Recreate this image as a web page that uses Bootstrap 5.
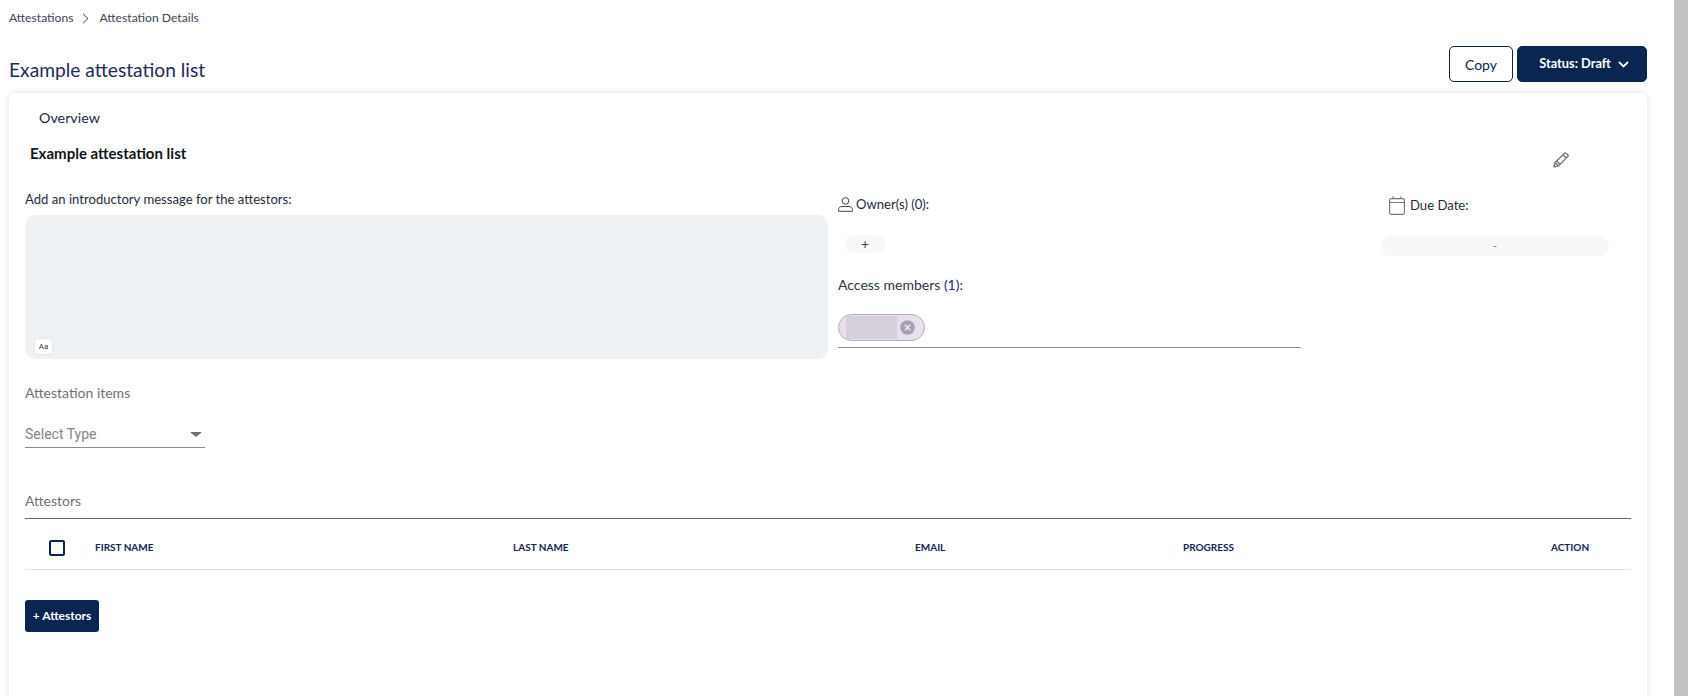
<!DOCTYPE html>
<html lang="en">
<head>
<meta charset="utf-8">
<title>Attestation Details</title>
<link href="https://cdn.jsdelivr.net/npm/bootstrap@5.3.0/dist/css/bootstrap.min.css" rel="stylesheet">
<style>
html,body{height:100%;overflow:hidden;background:#fff}
body{font-family:"Lato","Liberation Sans",sans-serif;color:#1f2a44;font-size:14px}
.shell{height:696px;overflow:hidden}
.scroll-track{width:14px;background:#c1c1c1;flex:none}
.content-area{width:1674px;flex:none;padding:0 27px 0 9px}
.crumbs{height:36px;font-size:12.15px;color:#3d4657}
.crumb-sep{margin:0 10px 0 8px;display:inline-flex}
.head-row{height:46px;margin-top:10px}
.page-title{font-size:19.2px;font-weight:400;color:#232a5c;margin:0;line-height:24px;padding-top:12px}
.btn-copy,.btn-status{height:36px;font-size:14px;border-radius:5px;padding:0;display:inline-flex;align-items:center;justify-content:center}
.btn-copy{width:64px;background:#fff;border:1px solid #0a2550;color:#0a2550}
.btn-status{width:130px;margin-left:4px;padding-left:4px;background:#0a2550;border:1px solid #0a2550;color:#fff;font-weight:700;font-size:12.8px;gap:7px}
.main-sheet{margin-top:1px;height:640px;border:0;border-radius:6px;box-shadow:0 0 6px rgba(0,0,0,.12);padding:0 16px}
.tab-label{padding:15px 0 0 14px;line-height:20px;font-size:14.3px;color:#232a44}
.sheet-title{margin:15px 0 0 5px;font-size:15px;font-weight:700;color:#10131c;line-height:20px;height:20px}
.edit-pencil{position:absolute;left:1544px;top:59px;line-height:0}
.overview-cols{margin-top:27px}
.col-intro{width:803px;flex:none}
.col-people{width:463px;margin-left:10px;flex:none}
.col-due{width:228px;margin-left:80px;flex:none}
.field-label{font-size:13.1px;line-height:18px;color:#262b3a}
.intro-box{margin-top:7px;height:144px;background:#eff2f5;border-radius:10px;position:relative}
.aa-chip{position:absolute;left:10px;bottom:5px;width:17px;height:15px;background:#fff;border-radius:4px;font-size:8px;line-height:15px;text-align:center;color:#444;font-family:"Roboto",sans-serif;box-shadow:0 0 2px rgba(0,0,0,.15)}
.owner-line{height:18px;margin-top:5px;display:flex;align-items:center;gap:3px}
.add-pill{margin:22px 0 0 7px;width:40px;height:18px;border-radius:9px;background:#f8f8f8;display:flex;align-items:center;justify-content:center;color:#444;font-size:14px;line-height:1}
.access-label{margin-top:22px;font-size:14px;line-height:20px;color:#2e3548}
.access-label b{font-weight:400;color:#232a7c}
.member-wrap{margin-top:19px;height:34px;border-bottom:1px solid #8c8c8c}
.member-chip{width:87px;height:27px;border-radius:14px;background:#e8e0ec;border:1px solid #b5adbd;display:flex;align-items:center;padding-left:7px}
.member-fill{width:51px;height:23px;background:#d8cfdd}
.member-x{margin-left:3px;line-height:0}
.due-line{height:18px;margin:6px 0 0 8px;display:flex;align-items:center;gap:5px}
.due-pill{margin-top:22px;height:20px;border-radius:10px;background:#f8f8f8;text-align:center;line-height:20px;color:#777;font-size:11px}
.section-label{color:#6f7178;font-size:14px;line-height:20px}
.items-label{margin-top:24px}
.type-select{margin-top:21px;width:180px;height:24px;border-bottom:1px solid #8c8c8c;display:flex;justify-content:space-between;align-items:center;padding:0 3px 3px 0;font-family:"Roboto",sans-serif;font-size:14px;color:#85868c}
.type-caret{width:0;height:0;border-left:6px solid transparent;border-right:6px solid transparent;border-top:5px solid #6f6f6f}
.attestors-label{margin-top:43px;height:28px;border-bottom:1px solid #6a6a6a;font-size:14px}
.att-table{width:1606px;table-layout:fixed;margin:0;--bs-table-border-color:#e2e2e2}
.att-table th{height:50px;padding:8px 0 0;vertical-align:middle;font-size:10px;font-weight:700;color:#14244f;text-transform:uppercase;border-bottom:1px solid #e2e2e2}
.check-box{display:block;width:16px;height:16px;border:2px solid #0a2550;border-radius:2px;margin-left:24px}
.btn-add{margin-top:30px;width:74px;height:32px;padding:0;background:#0a2550;border:0;border-radius:3px;color:#fff;font-size:12px;font-weight:700}
</style>
</head>
<body>
<div class="shell d-flex">
  <div class="content-area">
    <nav class="crumbs d-flex align-items-center" aria-label="breadcrumb">
      <span>Attestations</span>
      <span class="crumb-sep"><svg width="8" height="11" viewBox="0 0 8 11" fill="none" stroke="#444" stroke-width="1"><path d="M1 .8 6 5.5 1 10.2"/></svg></span>
      <span>Attestation Details</span>
    </nav>
    <div class="head-row d-flex justify-content-between align-items-start">
      <h1 class="page-title">Example attestation list</h1>
      <div class="d-flex">
        <button type="button" class="btn btn-copy">Copy</button>
        <button type="button" class="btn btn-status">Status: Draft
          <svg width="11" height="7" viewBox="0 0 11 7" fill="none" stroke="#fff" stroke-width="1.8"><path d="M1 1l4.5 4.5L10 1"/></svg>
        </button>
      </div>
    </div>
    <div class="card main-sheet position-relative">
      <div class="tab-label">Overview</div>
      <div class="sheet-title">Example attestation list</div>
      <span class="edit-pencil"><svg width="16" height="16" viewBox="0 0 16 16" fill="none" stroke="#707070" stroke-width="1.3"><path d="M1 15l1-4.5L11.6 1.2a1 1 0 0 1 1.4 0l1.9 1.8a1 1 0 0 1 0 1.4L5.5 14Z"/><path d="M2 10.5 5.5 14M3.8 9 7 12.2M10 2.8l3.2 3.2"/></svg></span>
      <div class="overview-cols d-flex">
        <div class="col-intro">
          <div class="field-label">Add an introductory message for the attestors:</div>
          <div class="intro-box"><span class="aa-chip">Aa</span></div>
        </div>
        <div class="col-people">
          <div class="owner-line field-label">
            <svg width="15" height="15" viewBox="0 0 15 15" fill="none" stroke="#444" stroke-width="1"><circle cx="7.5" cy="4" r="3.3"/><path d="M.6 14.3v-1.8c0-2 1.6-3 3.4-3h7c1.8 0 3.4 1 3.4 3v1.8Z"/></svg>
            <span>Owner(s) (0):</span>
          </div>
          <div class="add-pill">+</div>
          <div class="access-label">Access members <b>(1)</b>:</div>
          <div class="member-wrap">
            <div class="member-chip">
              <span class="member-fill"></span>
              <span class="member-x"><svg width="15" height="15" viewBox="0 0 15 15"><circle cx="7.5" cy="7.5" r="7.3" fill="#ab9fb4"/><path d="M4.8 4.8l5.4 5.4M10.2 4.8l-5.4 5.4" stroke="#eee" stroke-width="1.5"/></svg></span>
            </div>
          </div>
        </div>
        <div class="col-due">
          <div class="due-line field-label">
            <svg width="16" height="19" viewBox="0 0 16 19" fill="none" stroke="#777" stroke-width="1.1"><rect x=".6" y="2.6" width="14.8" height="15.8" rx="1.5"/><path d="M.6 6.5h14.8M4 .3v2.3M12 .3v2.3"/></svg>
            <span>Due Date:</span>
          </div>
          <div class="due-pill">-</div>
        </div>
      </div>
      <div class="section-label items-label">Attestation items</div>
      <div class="type-select"><span>Select Type</span><span class="type-caret"></span></div>
      <div class="section-label attestors-label">Attestors</div>
      <table class="table att-table">
        <colgroup><col style="width:70px"><col style="width:418px"><col style="width:402px"><col style="width:268px"><col style="width:368px"><col style="width:80px"></colgroup>
        <thead>
          <tr>
            <th><span class="check-box"></span></th>
            <th>First name</th>
            <th>Last name</th>
            <th>Email</th>
            <th>Progress</th>
            <th>Action</th>
          </tr>
        </thead>
      </table>
      <div><button type="button" class="btn btn-add">+ Attestors</button></div>
    </div>
  </div>
  <div class="scroll-track"></div>
</div>
<script src="https://cdn.jsdelivr.net/npm/bootstrap@5.3.0/dist/js/bootstrap.bundle.min.js"></script>
</body>
</html>
